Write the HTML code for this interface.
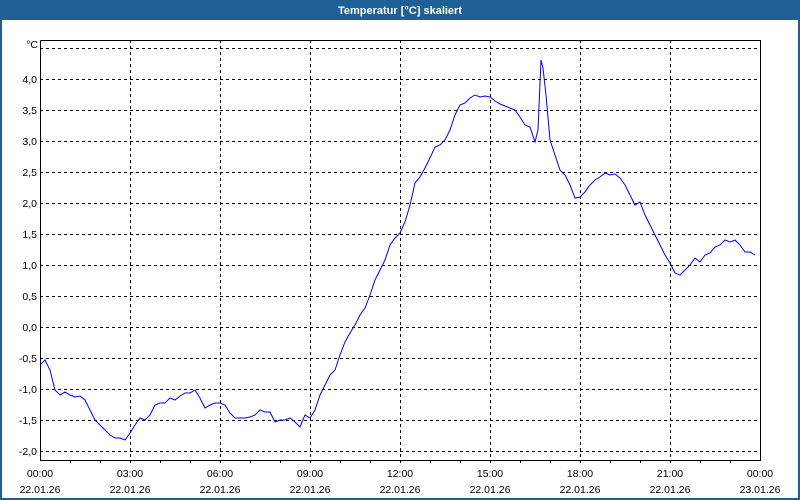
<!DOCTYPE html>
<html><head><meta charset="utf-8"><style>
html,body{margin:0;padding:0;width:800px;height:500px;overflow:hidden;background:#fff}
</style></head><body>
<svg width="800" height="500" xmlns="http://www.w3.org/2000/svg" font-family="Liberation Sans, sans-serif" font-size="10.5">
<rect x="0" y="0" width="800" height="500" fill="#1e6096"/>
<rect x="2" y="20" width="796" height="478" fill="#fff"/>
<text x="400" y="14" fill="#fff" font-weight="bold" font-size="11" text-anchor="middle">Temperatur [°C] skaliert</text>
<g stroke="#000" stroke-dasharray="3,3" stroke-width="1" shape-rendering="crispEdges">
<line x1="40" y1="48.5" x2="760" y2="48.5"/><line x1="40" y1="79.5" x2="760" y2="79.5"/><line x1="40" y1="110.5" x2="760" y2="110.5"/><line x1="40" y1="141.5" x2="760" y2="141.5"/><line x1="40" y1="172.5" x2="760" y2="172.5"/><line x1="40" y1="203.5" x2="760" y2="203.5"/><line x1="40" y1="234.5" x2="760" y2="234.5"/><line x1="40" y1="265.5" x2="760" y2="265.5"/><line x1="40" y1="296.5" x2="760" y2="296.5"/><line x1="40" y1="327.5" x2="760" y2="327.5"/><line x1="40" y1="358.5" x2="760" y2="358.5"/><line x1="40" y1="389.5" x2="760" y2="389.5"/><line x1="40" y1="420.5" x2="760" y2="420.5"/><line x1="40" y1="451.5" x2="760" y2="451.5"/>
<line x1="130.5" y1="40" x2="130.5" y2="460"/><line x1="220.5" y1="40" x2="220.5" y2="460"/><line x1="310.5" y1="40" x2="310.5" y2="460"/><line x1="400.5" y1="40" x2="400.5" y2="460"/><line x1="490.5" y1="40" x2="490.5" y2="460"/><line x1="580.5" y1="40" x2="580.5" y2="460"/><line x1="670.5" y1="40" x2="670.5" y2="460"/>
</g>
<g stroke="#000" stroke-width="1" fill="none" shape-rendering="crispEdges">
<polyline points="40.5,40.5 760.5,40.5 760.5,460.5 40.5,460.5 40.5,40.5"/>
<path d="M70.5 460v3M100.5 460v3M130.5 460v3M160.5 460v3M190.5 460v3M220.5 460v3M250.5 460v3M280.5 460v3M310.5 460v3M340.5 460v3M370.5 460v3M400.5 460v3M430.5 460v3M460.5 460v3M490.5 460v3M520.5 460v3M550.5 460v3M580.5 460v3M610.5 460v3M640.5 460v3M670.5 460v3M700.5 460v3M730.5 460v3"/>
</g>
<g fill="#000" text-anchor="end">
<text x="38" y="48">°C</text>
<text x="37" y="83">4,0</text><text x="37" y="114">3,5</text><text x="37" y="145">3,0</text><text x="37" y="176">2,5</text><text x="37" y="207">2,0</text><text x="37" y="238">1,5</text><text x="37" y="269">1,0</text><text x="37" y="300">0,5</text><text x="37" y="331">0,0</text><text x="37" y="362">-0,5</text><text x="37" y="393">-1,0</text><text x="37" y="424">-1,5</text><text x="37" y="455">-2,0</text>
</g>
<g fill="#000" text-anchor="middle">
<text x="40" y="477">00:00</text><text x="130" y="477">03:00</text><text x="220" y="477">06:00</text><text x="310" y="477">09:00</text><text x="400" y="477">12:00</text><text x="490" y="477">15:00</text><text x="580" y="477">18:00</text><text x="670" y="477">21:00</text><text x="760" y="477">00:00</text>
<text x="40" y="493">22.01.26</text><text x="130" y="493">22.01.26</text><text x="220" y="493">22.01.26</text><text x="310" y="493">22.01.26</text><text x="400" y="493">22.01.26</text><text x="490" y="493">22.01.26</text><text x="580" y="493">22.01.26</text><text x="670" y="493">22.01.26</text><text x="760" y="493">23.01.26</text>
</g>
<polyline fill="none" stroke="#0000ff" stroke-width="1" points="40,365 45,360 50,370 55,390 60,395 65,392 70,395 75,397 80,396 85,400 90,410 95,420 100,425 105,430 110,435 115,438 120,438 125,440 130,433 135,425 140,418 145,420 150,415 155,405 160,403 165,403 170,398 175,400 180,396 185,393 190,393 195,390 200,398 205,408 210,405 215,403 220,403 225,405 230,413 235,418 240,418 245,418 250,417 255,415 260,410 265,412 270,412 275,422 280,420 285,420 290,418 295,422 300,427 305,415 310,418 315,410 320,395 325,385 330,375 335,370 340,355 345,342 350,333 355,325 360,315 365,308 370,295 375,280 380,270 385,260 390,245 395,238 400,233 405,222 410,205 415,183 420,177 425,168 430,158 435,147 440,145 445,140 450,130 455,115 460,105 465,103 470,98 475,95 480,97 485,96 490,97 495,101 500,104 505,106 510,108 515,110 520,117 525,125 530,127 535,142 538,130 541,60 543,68 546,95 550,140 555,155 560,170 565,175 570,185 575,198 580,197 585,192 590,185 595,180 600,177 605,173 610,175 615,174 620,178 625,185 630,195 635,205 640,202 645,215 650,225 655,235 660,245 665,255 670,263 675,273 680,275 685,270 690,265 695,258 700,262 705,255 710,253 715,247 720,245 725,240 730,242 735,240 740,245 745,252 750,252 755,255"/>
</svg>
</body></html>
